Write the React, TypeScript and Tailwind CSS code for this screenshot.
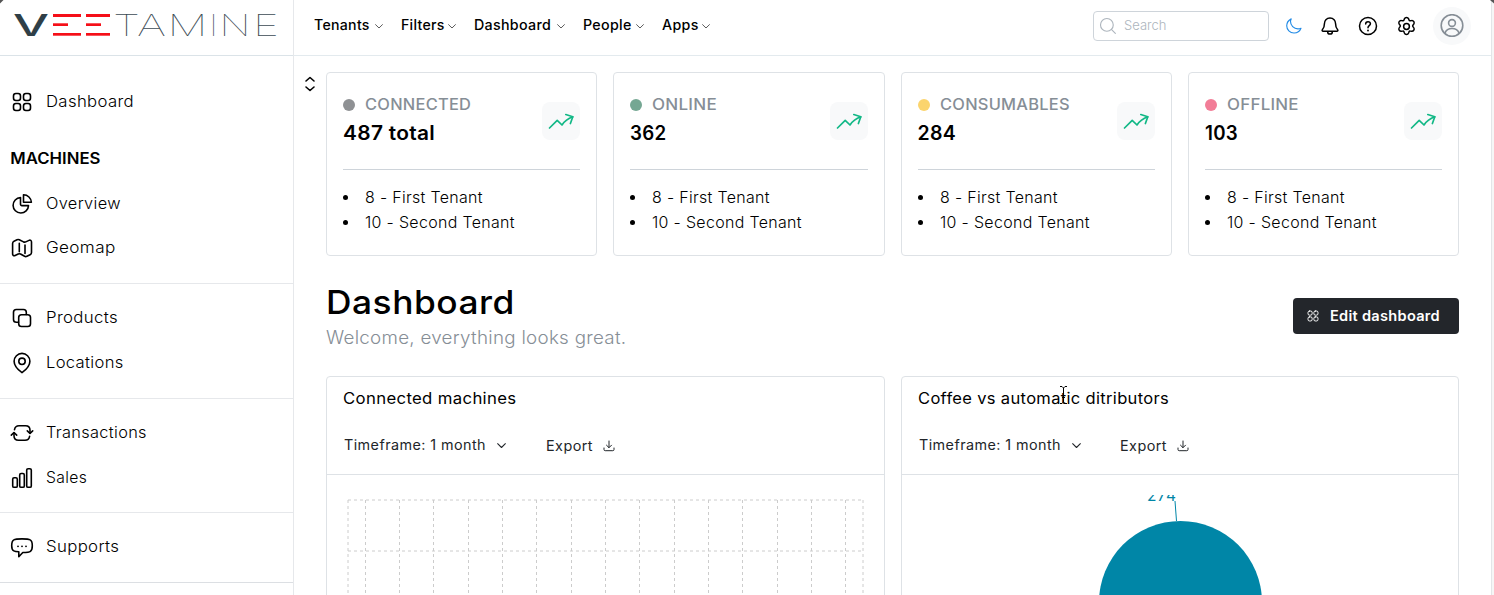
import type { ReactNode } from "react";

function Icon({ children, size = 24, className = "", sw = 1.5 }: { children: ReactNode; size?: number; className?: string; sw?: number }) {
  return (
    <svg width={size} height={size} viewBox="0 0 24 24" fill="none" stroke="currentColor" strokeWidth={sw} strokeLinecap="round" strokeLinejoin="round" className={`shrink-0 ${className}`}>
      {children}
    </svg>
  );
}

const gridIcon = (
  <>
    <rect x="3.5" y="3.5" width="7" height="7" rx="2.4" />
    <rect x="13.5" y="3.5" width="7" height="7" rx="2.4" />
    <rect x="3.5" y="13.5" width="7" height="7" rx="2.4" />
    <rect x="13.5" y="13.5" width="7" height="7" rx="2.4" />
  </>
);
const pieIcon = (
  <>
    <path d="M10.5 5.6a7.7 7.7 0 1 0 8 8h-6.6a1.4 1.4 0 0 1-1.4-1.4z" />
    <path d="M13.5 2.8v7.5h7.9a7.9 7.9 0 0 0-7.9-7.5z" />
  </>
);
const mapIcon = (
  <>
    <path d="M2.6 7.4c0-1 .5-1.8 1.4-2.200l3-1.400c.9-.4 1.500-.4 2.300 0l4.200 2.100c.9.4 1.500.4 2.300 0l3.200-1.500c1.300-.6 2.500.1 2.500 1.600v10.500c0 1-.5 1.800-1.400 2.200l-3.200 1.600c-.8.4-1.500.4-2.300 0L10.500 18c-.8-.4-1.500-.4-2.300 0l-3.100 1.500c-1.300.6-2.500-.1-2.500-1.600z" />
    <path d="M9.300 7.300v8.500M15 9v8.500" />
  </>
);
const copyIcon = (
  <>
    <rect x="8.700" y="8.700" width="11.800" height="11.800" rx="2.800" />
    <path d="M8.500 16.300H6.300a2.800 2.800 0 0 1-2.800-2.800V6.300a2.800 2.800 0 0 1 2.800-2.800h7.200a2.800 2.800 0 0 1 2.800 2.800v2.200" />
  </>
);
const pinIcon = (
  <>
    <path d="M12 21.700c-2.400-1.700-7.900-6.400-7.900-11.400a7.900 7.900 0 0 1 15.800 0c0 5-5.500 9.700-7.900 11.400z" />
    <circle cx="12" cy="10.300" r="3.200" />
  </>
);
const syncIcon = (
  <>
    <path d="M4.500 8.600C5 5.800 6.500 4.700 9 4.700h6.500c3 0 4.500 1.500 4.500 4.500v3" />
    <path d="m17.300 9.900 2.700 2.600 2.700-2.600" />
    <path d="M19.600 15.400c-.5 2.800-2 3.900-4.600 3.900H8.500C5.500 19.300 4 17.800 4 14.800v-3" />
    <path d="m1.300 14.100 2.700-2.600 2.700 2.600" />
  </>
);
const barsIcon = (
  <>
    <rect x="2.700" y="11.800" width="4.600" height="9.500" rx="1.400" />
    <rect x="9.700" y="7.500" width="4.600" height="13.800" rx="1.400" />
    <rect x="16.700" y="2.700" width="4.600" height="18.600" rx="1.400" />
  </>
);
const chatIcon = (
  <>
    <path d="M8.800 16.800v4.900l4-4.200c4.200-.1 6.300-.2 7.600-1.200 1.600-1.100 1.900-2.700 1.900-5.600 0-3-.3-4.800-2.100-5.800-1.500-.9-4-1-8.200-1s-6.700.1-8.200 1c-1.800 1-2.100 2.800-2.100 5.800 0 2.700.3 4.200 2.100 5.200 1.100.6 2.800.8 5 .9z" />
    <path d="M8 11.300h.01M12 11.300h.01M16 11.300h.01" strokeWidth="1.800" />
  </>
);

function NavItem({ icon, label, stretch }: { icon: ReactNode; label: string; stretch: string }) {
  return (
    <div className="flex h-[44.500px] items-center pl-[10px]">
      <Icon size={24} sw={1.600} className="relative top-px">{icon}</Icon>
      <span className={`ml-3 origin-left pt-px text-[15.500px] font-light tracking-[0.020em] ${stretch}`}>{label}</span>
    </div>
  );
}

function Chevron({ className = "", size = 7 }: { className?: string; size?: number }) {
  return (
    <svg width={size} height={size * 0.6} viewBox="0 0 10 6" fill="none" stroke="currentColor" strokeWidth="1.200" strokeLinecap="round" strokeLinejoin="round" className={className}>
      <path d="m.7.800 4.300 4.200L9.300.8" />
    </svg>
  );
}

const menus = [
  { label: "Tenants", box: "w-[86.500px]", stretch: "scale-x-[1.010]" },
  { label: "Filters", box: "w-[73.500px]", stretch: "scale-x-[1.010]" },
  { label: "Dashboard", box: "w-[109px]", stretch: "scale-x-[1.020]" },
  { label: "People", box: "w-[79px]", stretch: "scale-x-[1.020]" },
  { label: "Apps", box: "w-[66px]", stretch: "scale-x-[1.020]" },
];

const stats = [
  { label: "CONNECTED", value: "487 total", dot: "bg-[#8f9194]", labelStretch: "scale-x-[1.060]", valueStretch: "scale-x-[1.070]" },
  { label: "ONLINE", value: "362", dot: "bg-[#75a793]", labelStretch: "scale-x-[1.100]", valueStretch: "scale-x-[0.960]" },
  { label: "CONSUMABLES", value: "284", dot: "bg-[#fbd46d]", labelStretch: "scale-x-[1.060]", valueStretch: "scale-x-[1.000]" },
  { label: "OFFLINE", value: "103", dot: "bg-[#f27d97]", labelStretch: "scale-x-[1.090]", valueStretch: "scale-x-[0.960]" },
];

function StatCard({ label, value, dot, labelStretch, valueStretch }: (typeof stats)[number]) {
  return (
    <section className="h-[184px] rounded border border-[#dee2e6] px-4">
      <div className="flex h-[97px] items-center justify-between border-b border-[#ced4da]">
        <div className="pb-0.5">
          <div className="flex h-[27px] items-center">
            <span className={`mt-px size-3 rounded-full ${dot}`} />
            <span className={`ml-[10px] origin-left text-[15.500px] font-medium tracking-[0.015em] text-[#868e96] ${labelStretch}`}>{label}</span>
          </div>
          <div className={`h-[31px] origin-left text-[19.500px] leading-[31px] font-semibold tracking-[0.015em] ${valueStretch}`}>{value}</div>
        </div>
        <div className="flex size-[38px] items-center justify-center rounded-lg bg-[#f8f9fa]">
          <svg width="26" height="18" viewBox="0 0 26 18" fill="none" stroke="#12b886" strokeWidth="1.700" strokeLinecap="round" strokeLinejoin="round">
            <path d="M1.500 16 9.200 8.300 14 13c2.500-3.800 6-6.500 10.800-8.200" />
            <path d="m17.800 2.500 7 2.200-2.400 6.800" />
          </svg>
        </div>
      </div>
      <ul className="pt-[15px] text-[15.500px] leading-[25px] font-light">
        {["8 - First Tenant", "10 - Second Tenant"].map((t) => (
          <li key={t} className="flex items-center">
            <span className="size-[5px] rounded-full bg-black" />
            <span className="ml-[17px] origin-left scale-x-[1.030] tracking-[0.020em]">{t}</span>
          </li>
        ))}
      </ul>
    </section>
  );
}

function Panel({ title, children }: { title: ReactNode; children: ReactNode }) {
  return (
    <section className="h-[320px] rounded-t border border-[#dee2e6]">
      <div className="h-[98px] border-b border-[#dee2e6] px-4 pt-[10px]">
        <h2 className="h-6 text-[15.500px] leading-6 font-normal tracking-[0.020em]">{title}</h2>
        <div className="mt-[22px] flex h-6 items-center text-[14px] font-normal text-[#212529]">
          <span className="ml-px w-[153px] origin-left scale-x-[1.025] pb-px whitespace-nowrap tracking-[0.030em]">Timeframe: 1 month</span>
          <Chevron size={9} className="mt-px" />
          <span className="mt-px ml-[39.500px] w-[57px] origin-left scale-x-[1.030] tracking-[0.030em]">Export</span>
          <svg width="12" height="12" viewBox="0 0 12 12" fill="none" stroke="currentColor" strokeWidth="1" strokeLinecap="round" strokeLinejoin="round" className="mt-0.5">
            <path d="M6 1v6.500M3.500 5.200 6 7.700l2.500-2.500M1 8v1.500a1.200 1.200 0 0 0 1.200 1.200h7.600A1.200 1.200 0 0 0 11 9.500V8" />
          </svg>
        </div>
      </div>
      {children}
    </section>
  );
}

const columns = Array.from({ length: 15 }, (_, i) => 38.5 + Math.floor(i * 34.35));

export default function App() {
  return (
    <div className="relative h-[595px] w-[1494px] overflow-hidden bg-[#f6f6f6] font-['Inter','Liberation_Sans',sans-serif] text-black">
      <div className="flex h-full w-[1492px] border-r border-[#e3e5e8] bg-white">
        <aside className="flex w-[294px] shrink-0 flex-col border-r border-[#e6e8eb]">
          <div className="h-14 shrink-0 border-b border-[#dbe3e8]">
            <svg width="293" height="50" viewBox="0 0 293 50">
              <text x="13" y="35.500" fontSize="30" fontWeight="500" fill="#2f3f47" textLength="36" lengthAdjust="spacingAndGlyphs">V</text>
              <g fill="#f50f18">
                <rect x="53" y="14" width="28" height="3" />
                <rect x="53" y="23.300" width="15" height="2.700" />
                <rect x="53" y="33" width="28" height="2.700" />
                <rect x="86" y="14" width="24" height="3" />
                <rect x="86" y="23.300" width="15" height="2.700" />
                <rect x="86" y="33" width="24" height="2.700" />
              </g>
              <text y="35.700" fontSize="30" fontWeight="100" fill="#3d4b54">
                <tspan x="113" textLength="27" lengthAdjust="spacingAndGlyphs">T</tspan>
                <tspan x="137" textLength="29" lengthAdjust="spacingAndGlyphs">A</tspan>
                <tspan x="167.500" textLength="40" lengthAdjust="spacingAndGlyphs">M</tspan>
                <tspan x="209.500" textLength="8" lengthAdjust="spacingAndGlyphs">I</tspan>
                <tspan x="219.500" textLength="31" lengthAdjust="spacingAndGlyphs">N</tspan>
                <tspan x="253" textLength="26" lengthAdjust="spacingAndGlyphs">E</tspan>
              </text>
            </svg>
          </div>
          <nav className="flex flex-col">
            <div className="pt-[23px]">
              <NavItem icon={gridIcon} label="Dashboard" stretch="scale-x-[1.080]" />
            </div>
            <div className="border-b border-[#e6e8eb] pt-3 pb-[13px]">
              <h3 className="flex h-[45px] origin-left scale-x-[1.080] items-center pt-0.5 pl-[9.500px] text-[15.500px] font-semibold">MACHINES</h3>
              <NavItem icon={pieIcon} label="Overview" stretch="scale-x-[1.055]" />
              <NavItem icon={mapIcon} label="Geomap" stretch="scale-x-[1.105]" />
            </div>
            <div className="border-b border-[#e6e8eb] pt-[11.500px] pb-[13.500px]">
              <NavItem icon={copyIcon} label="Products" stretch="scale-x-[1.085]" />
              <NavItem icon={pinIcon} label="Locations" stretch="scale-x-[1.070]" />
            </div>
            <div className="border-b border-[#e6e8eb] pt-[11.500px] pb-[12.500px]">
              <NavItem icon={syncIcon} label="Transactions" stretch="scale-x-[1.055]" />
              <NavItem icon={barsIcon} label="Sales" stretch="scale-x-[1.015]" />
            </div>
            <div className="border-b border-[#dcdfe3] pt-[11px] pb-[13.500px]">
              <NavItem icon={chatIcon} label="Supports" stretch="scale-x-[1.085]" />
            </div>
          </nav>
        </aside>
        <div className="flex min-w-0 flex-1 flex-col">
          <header className="flex h-14 shrink-0 items-center border-b border-[#e3eaee] pb-1 pl-5">
            {menus.map((m) => (
              <div key={m.label} className={`flex items-center pb-0.5 text-[14px] font-medium ${m.box}`}>
                <span className={`origin-left tracking-[0.020em] ${m.stretch}`}>{m.label}</span>
                <Chevron className="mt-[3px] mr-[18px] ml-auto shrink-0 text-[#555]" size={8} />
              </div>
            ))}
            <div className="ml-auto flex h-[30px] w-[176px] items-center rounded border border-[#ced4da]">
              <Icon size={18} sw={1.500} className="ml-[5px] text-[#adb5bd]">
                <circle cx="10.500" cy="10.500" r="8.500" />
                <path d="m16.500 16.500 5.300 5.300" />
              </Icon>
              <span className="ml-[7px] text-[13px] font-light text-[#adb5bd]">Search</span>
            </div>
            <div className="flex items-center pt-px">
              <Icon size={18} sw={1.500} className="ml-4 text-[#228be6]">
                <path d="M8.300 2.500C5 4.200 2.300 7.500 2.300 11.700c0 5.300 4.300 9.700 9.700 9.700 4.200 0 7.900-2.700 9.300-6.400-1.400.6-2.600.8-4 .8-5.600 0-10-4.400-10-10 0-1.100.4-2.200 1-3.300z" />
              </Icon>
              <Icon size={20} sw={1.800} className="ml-[17px]">
                <path d="M12 2.500c-4.200 0-6.700 3.100-6.700 6.900 0 3.900-.9 5.500-2.300 6.900-.9.900-.4 2 .8 2h16.400c1.200 0 1.700-1.100.8-2-1.400-1.400-2.300-3-2.300-6.900 0-3.800-2.500-6.900-6.700-6.900z" />
                <path d="M9.200 18.800c0 1.700 1.200 2.900 2.800 2.900s2.800-1.200 2.800-2.900" />
              </Icon>
              <Icon size={20} sw={1.800} className="ml-[18px]">
                <circle cx="12" cy="12" r="10.200" />
                <path d="M9.200 9.500c0-1.700 1.200-2.700 2.800-2.700s2.900 1 2.900 2.600c0 2.300-2.900 2.200-2.900 4.700" />
                <path d="M12 17.300v.1" strokeWidth="2.200" />
              </Icon>
              <Icon size={21} sw={1.700} className="ml-[18px]">
                <circle cx="12" cy="12" r="3.300" />
                <path d="M9.600 3.300c.4-1 1.200-1.600 2.400-1.600s2 .6 2.400 1.600l.5 1.300c.2.600.8.900 1.400.8l1.500-.2c1.100-.2 2 .3 2.600 1.300s.5 2-.2 2.900l-.9 1.100c-.4.5-.4 1.100 0 1.600l.9 1.200c.7.900.8 1.900.2 2.900s-1.500 1.400-2.600 1.300l-1.500-.2c-.6-.1-1.200.2-1.400.8l-.5 1.400c-.4 1-1.200 1.600-2.400 1.600s-2-.6-2.400-1.600l-.5-1.400c-.2-.6-.8-.9-1.400-.8l-1.500.2c-1.100.1-2-.3-2.600-1.300s-.5-2 .2-2.900l.9-1.200c.4-.5.4-1.100 0-1.600l-.9-1.100c-.7-.9-.8-1.900-.2-2.900s1.500-1.500 2.600-1.300l1.500.2c.6.1 1.200-.2 1.400-.8z" />
              </Icon>
              <div className="mr-5 ml-4 flex size-[38px] items-center justify-center rounded-full bg-[#f8f9fa] text-[#868e96]">
                <Icon size={24} sw={1.600}>
                  <circle cx="12" cy="11.500" r="10.800" />
                  <circle cx="12" cy="9" r="3.400" />
                  <path d="M5 19c1.200-3.300 3.800-4.500 7-4.500s5.800 1.200 7 4.500" />
                </Icon>
              </div>
            </div>
          </header>
          <main className="flex flex-1 pt-4 pr-8">
            <div className="w-8 shrink-0 pt-1 pl-[10px]">
              <svg width="12" height="16" viewBox="0 0 12 16" fill="none" stroke="black" strokeWidth="1.600" strokeLinecap="round" strokeLinejoin="round">
                <path d="M2 5 6 1.500 10 5M2 11l4 3.500 4-3.500" />
              </svg>
            </div>
            <div className="min-w-0 flex-1">
              <div className="grid grid-cols-4 gap-4">
                {stats.map((s) => (
                  <StatCard key={s.label} {...s} />
                ))}
              </div>
              <div className="flex h-[120px] items-center justify-between">
                <div>
                  <h1 className="h-11 origin-left scale-x-[1.070] text-[33px] leading-[44px] font-medium tracking-[0.015em]">Dashboard</h1>
                  <p className="h-7 origin-left scale-x-[1.043] text-[18px] leading-7 font-light tracking-[0.015em] text-[#868e96]">Welcome, everything looks great.</p>
                </div>
                <button className="flex h-9 w-[166px] items-center rounded bg-[#23262b] pl-[13px] text-white">
                  <Icon size={14} sw={1.700}>{gridIcon}</Icon>
                  <span className="ml-[10px] origin-left scale-x-[1.040] pb-0.5 text-[14px] font-semibold tracking-[0.020em] whitespace-nowrap">Edit dashboard</span>
                </button>
              </div>
              <div className="grid grid-cols-2 gap-4">
                <Panel title={<span className="inline-block origin-left scale-x-[1.080]">Connected machines</span>}>
                  <svg width="557" height="121" viewBox="0 0 557 121" fill="none" stroke="#ccc" strokeDasharray="3 3">
                    <path d="M21 25H536M21 76H536M21 25V121M536 25V121" />
                    {columns.map((x) => (
                      <path key={x} d={`M${x} 25V121`} />
                    ))}
                  </svg>
                </Panel>
                <Panel
                  title={
                    <span className="relative inline-block">
                      <span className="inline-block origin-left scale-x-[1.065]">Coffee vs automatic ditributors</span>
                      <svg className="absolute top-[-1px] left-[141px]" width="9" height="18" viewBox="0 0 9 18" fill="none" stroke="black" strokeWidth="1">
                        <path d="M1 .500h2l1.500 1.500L6 .500h2M4.500 2v14M1 17.500h2L4.500 16 6 17.500h2M3 11.500h3" />
                      </svg>
                    </span>
                  }
                >
                  <svg width="557" height="101" viewBox="0 0 557 101" className="mt-5">
                    <circle cx="278.500" cy="107.500" r="81.500" fill="#0086a7" />
                    <path d="M274.500 26 273 6" stroke="#0086a7" fill="none" />
                    <text x="245" y="5.500" fontSize="15.500" fill="#0086a7" textLength="29">274</text>
                  </svg>
                </Panel>
              </div>
            </div>
          </main>
        </div>
      </div>
      <svg className="absolute top-0 left-0" width="4" height="4"><path d="M0 0h3.500L0 3.500z" fill="#555" /></svg>
      <svg className="absolute top-0 right-0" width="4" height="4"><path d="M0 0h4v3.500z" fill="#555" /></svg>
    </div>
  );
}
